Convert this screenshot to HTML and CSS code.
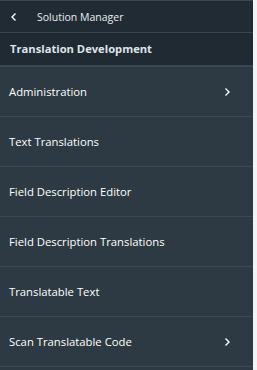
FILE: index.html
```html
<!DOCTYPE html>
<html>
<head>
<meta charset="utf-8">
<link rel="stylesheet" href="styles.css">
</head>
<body>
<div class="page">
  <nav class="panel">
    <div class="topbar">
      <span class="back">
        <svg width="8" height="10" viewBox="0 0 8 10"><path d="M5.5 1.5 L2 5 L5.5 8.5" fill="none" stroke="#ffffff" stroke-width="1.4"/></svg>
      </span>
      <span class="toptitle">Solution Manager</span>
    </div>
    <div class="section">Translation Development</div>
    <ul class="list">
      <li class="item"><span>Administration</span><svg class="chev" width="8" height="10" viewBox="0 0 8 10"><path d="M2.5 1.5 L6 5 L2.5 8.5" fill="none" stroke="#ffffff" stroke-width="1.4"/></svg></li>
      <li class="item"><span>Text Translations</span></li>
      <li class="item"><span>Field Description Editor</span></li>
      <li class="item"><span>Field Description Translations</span></li>
      <li class="item"><span>Translatable Text</span></li>
      <li class="item"><span>Scan Translatable Code</span><svg class="chev" width="8" height="10" viewBox="0 0 8 10"><path d="M2.5 1.5 L6 5 L2.5 8.5" fill="none" stroke="#ffffff" stroke-width="1.4"/></svg></li>
    </ul>
  </nav>
  <div class="edge"></div>
</div>
</body>
</html>
```
FILE: styles.css
```css
html, body {
  margin: 0;
  padding: 0;
  background: #2d3a43;
}
body {
  font-family: "Open Sans", "Noto Sans", sans-serif;
  color: #ffffff;
}
.page {
  display: flex;
  width: 257px;
  height: 370px;
  overflow: hidden;
}
.panel {
  width: 253px;
  flex: none;
  background: #2d3a43;
}
.edge {
  flex: 1;
  background: #f3f3f4;
}
.topbar {
  display: flex;
  align-items: center;
  background: #202b33;
  border-top: 1px solid #3a4650;
  border-bottom: 1px solid #3a4650;
  box-sizing: border-box;
  height: 33px;
}
.back {
  width: 27px;
  padding-left: 10px;
  display: flex;
  align-items: center;
}
.toptitle {
  font-size: 10.5px;
  color: #e8ecef;
}
.section {
  height: 34px;
  box-sizing: border-box;
  display: flex;
  align-items: center;
  padding-left: 10px;
  padding-bottom: 1px;
  font-size: 11.2px;
  font-weight: 700;
  color: #dfe5ea;
  background: #1f2a33;
  border-bottom: 2px solid #3a4650;
}
.list {
  list-style: none;
  margin: 0;
  padding: 0;
}
.item {
  height: 50px;
  box-sizing: border-box;
  display: flex;
  align-items: center;
  justify-content: space-between;
  padding: 0 22px 0 9px;
  font-size: 11.3px;
  color: #ffffff;
  border-bottom: 1px solid #3b4852;
}
.chev {
  display: block;
}
```
